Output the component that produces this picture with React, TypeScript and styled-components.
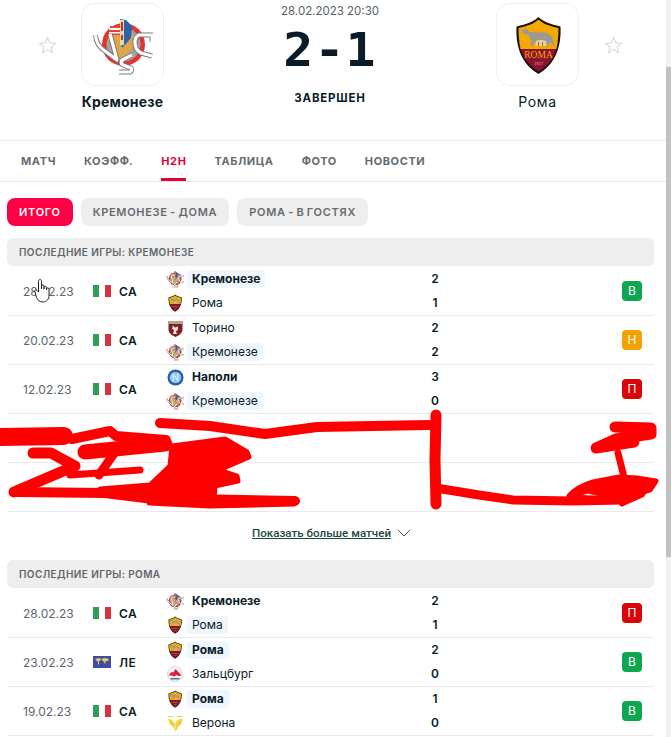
import type { ReactNode } from "react";
import styled, { createGlobalStyle } from "styled-components";

const GlobalStyle = createGlobalStyle`
  html, body {
    margin: 0;
    padding: 0;
    background: #ffffff;
    overflow: hidden;
  }
  body {
    font-family: Inter, "Noto Sans", sans-serif;
    color: #0b1c28;
  }
`;

const Page = styled.div`
  position: relative;
  width: 671px;
  height: 737px;
  overflow: hidden;
  display: flex;
`;

const Content = styled.div`
  width: 666px;
  flex: none;
`;

const ScrollTrack = styled.div`
  width: 5px;
  flex: none;
  background: #f1f1f1;
  padding-top: 67px;
`;

const ScrollThumb = styled.div`
  height: 490px;
  background: #c1c1c1;
`;

const Header = styled.div`
  height: 141px;
  box-sizing: border-box;
  padding-top: 3px;
  display: grid;
  grid-template-columns: 81px 83px 1fr 83px 87px;
  border-bottom: 1px solid #e9e9e9;
`;

const StarCell = styled.div<{ $side: "left" | "right" }>`
  padding-top: 33px;
  display: flex;
  justify-content: ${(p) => (p.$side === "left" ? "flex-start" : "flex-end")};
  padding-left: ${(p) => (p.$side === "left" ? "38px" : "0")};
  padding-right: ${(p) => (p.$side === "right" ? "43px" : "0")};
`;

const TeamCol = styled.div`
  display: flex;
  flex-direction: column;
  align-items: center;
`;

const LogoCard = styled.div`
  width: 83px;
  height: 83px;
  box-sizing: border-box;
  border: 1px solid #eeeeee;
  border-radius: 14px;
  display: flex;
  align-items: center;
  justify-content: center;
`;

const TeamName = styled.div<{ $bold?: boolean }>`
  margin-top: 6px;
  font-size: 14px;
  line-height: 20px;
  white-space: nowrap;
  letter-spacing: ${(p) => (p.$bold ? "0.2px" : "0.6px")};
  font-weight: ${(p) => (p.$bold ? 700 : 400)};
`;

const Center = styled.div`
  display: flex;
  flex-direction: column;
  align-items: center;
`;

const MatchDate = styled.div`
  font-size: 11.5px;
  line-height: 16px;
  color: #555f66;
`;

const Score = styled.div`
  margin-top: 7px;
  font-family: "DejaVu Sans Mono", monospace;
  font-weight: 700;
  font-size: 47px;
  line-height: 48px;
  letter-spacing: 1px;
  transform: scaleX(1.06);
  color: #0b1c28;
`;

const Status = styled.div`
  margin-top: 16px;
  font-size: 11.5px;
  line-height: 16px;
  font-weight: 700;
  letter-spacing: 0.8px;
`;

const Tabs = styled.div`
  height: 40px;
  display: flex;
  gap: 28px;
  padding-left: 21px;
  border-bottom: 1px solid #e9e9e9;
`;

const Tab = styled.div<{ $active?: boolean }>`
  height: 40px;
  box-sizing: border-box;
  padding-top: 12px;
  font-size: 11px;
  line-height: 16px;
  font-weight: 700;
  letter-spacing: 0.6px;
  color: ${(p) => (p.$active ? "#e4003a" : "#666b70")};
  border-bottom: 3px solid ${(p) => (p.$active ? "#e4003a" : "transparent")};
`;

const Pills = styled.div`
  display: flex;
  gap: 8px;
  padding: 16px 0 0 7px;
  height: 56px;
  box-sizing: border-box;
`;

const Pill = styled.div<{ $active?: boolean }>`
  height: 28px;
  box-sizing: border-box;
  padding: 0 12px;
  border-radius: 8px;
  font-size: 11px;
  line-height: 28px;
  font-weight: 600;
  letter-spacing: 0.7px;
  word-spacing: -1px;
  background: ${(p) => (p.$active ? "#ff0046" : "#eeeeee")};
  color: ${(p) => (p.$active ? "#ffffff" : "#666b70")};
`;

const SectionHead = styled.div`
  margin: 0 0 1px 7px;
  width: 647px;
  height: 28px;
  box-sizing: border-box;
  padding-left: 12px;
  background: #eeeeee;
  border-radius: 6px;
  font-size: 10px;
  line-height: 28px;
  font-weight: 600;
  letter-spacing: 0.4px;
  color: #60666b;
`;

const Row = styled.div`
  margin-left: 7px;
  width: 647px;
  height: 49px;
  box-sizing: border-box;
  border-bottom: 1px solid #e9e9e9;
  display: flex;
  align-items: center;
`;

const DateCell = styled.div`
  width: 86px;
  padding-left: 16px;
  box-sizing: border-box;
  font-size: 12px;
  color: #60666b;
`;

const FlagBox = styled.div`
  width: 18px;
  height: 12px;
  display: flex;
  flex: none;
`;

const League = styled.div`
  width: 55px;
  padding-left: 8px;
  box-sizing: border-box;
  font-size: 12px;
  font-weight: 600;
  letter-spacing: 0.4px;
`;

const Teams = styled.div`
  width: 259px;
  display: flex;
  flex-direction: column;
`;

const TeamLine = styled.div`
  height: 24px;
  display: flex;
  align-items: center;
  gap: 3px;
`;

const MiniLogo = styled.div`
  width: 18px;
  height: 18px;
  flex: none;
  display: flex;
  align-items: center;
  justify-content: center;
`;

const TeamLabel = styled.div<{ $bold?: boolean; $mark?: boolean }>`
  font-size: 12px;
  line-height: 18px;
  padding: 0 5px;
  border-radius: 4px;
  font-weight: ${(p) => (p.$bold ? 700 : 400)};
  background: ${(p) => (p.$mark ? "#eff6fd" : "transparent")};
`;

const Goals = styled.div`
  width: 20px;
  display: flex;
  flex-direction: column;
  align-items: center;
  font-size: 12px;
  font-weight: 600;
`;

const Goal = styled.div`
  height: 24px;
  line-height: 24px;
`;

const ResultCell = styled.div`
  flex: 1;
  display: flex;
  justify-content: flex-end;
  padding-right: 12px;
`;

const Badge = styled.div<{ $tone: string }>`
  width: 20px;
  height: 20px;
  border-radius: 4px;
  background: ${(p) => p.$tone};
  color: #ffffff;
  opacity: 0.98;
  font-size: 12px;
  line-height: 20px;
  text-align: center;
`;

const MoreRow = styled.div`
  height: 48px;
  display: flex;
  align-items: center;
  justify-content: center;
  gap: 6px;
  padding: 0 3px 7px 0;
  box-sizing: border-box;
`;

const MoreLink = styled.span`
  font-family: Roboto, sans-serif;
  font-size: 11.6px;
  font-weight: 500;
  color: #1d4a44;
  text-decoration: underline;
`;

const Scribble = styled.svg`
  position: absolute;
  left: 0;
  top: 0;
  pointer-events: none;
`;

const Cursor = styled.svg`
  position: absolute;
  left: 34px;
  top: 278px;
`;

const Star = () => (
  <svg width="19" height="19" viewBox="0 0 24 24" fill="none" stroke="#d8d8d8" strokeWidth="1.4" strokeLinejoin="miter">
    <path d="M12 2l2.900 6.600 7.100.7-5.400 4.700 1.600 7L12 16.900 5.800 21l1.600-7L2 9.300l7.100-.7z" />
  </svg>
);

const CremoneseLogo = ({ size }: { size: number }) => (
  <svg width={size} height={size} viewBox="0 0 60 60">
    <circle cx="30.500" cy="29.500" r="21.500" fill="#e4342f" />
    <circle cx="30.500" cy="29.500" r="17" fill="#a2a2a2" />
    <path d="M15 20h28c0 10-6 18-14 25-8-7-14-15-14-25z" fill="#dda64a" />
    <path d="M16 11h13v9H16z" fill="#ffffff" />
    <path d="M17 11h12v2H17zM15 15h14v2H15zM15 18.500h14v1.500H15z" fill="#e9413b" />
    <path d="M27 4l6 1 6 6-1 12-9 10z" fill="#2b62ae" />
    <path d="M27 5h4v25h-4z" fill="#e8d9a0" />
    <path d="M28 7h2v9h-2zM28 20h2v5h-2z" fill="#c9302a" />
    <g fill="none" stroke="#77797a" strokeWidth="5" strokeLinejoin="round" strokeLinecap="butt">
      <path d="M2.500 20.500C3 27 6 32 12 36l12 9-7-26" />
      <path d="M59 27v-7H46c-3 1-4 4-4 7 0 5 2 9 6 11l11 3" />
      <path d="M39 40l-10 5c-1 2-1 4 1 5l8 3c1 1 1 3-1 4H26" />
    </g>
    <g fill="none" stroke="#ffffff" strokeWidth="3.200" strokeLinejoin="round" strokeLinecap="butt">
      <path d="M2.500 20.500C3 27 6 32 12 36l12 9-7-26" />
      <path d="M59 27v-7H46c-3 1-4 4-4 7 0 5 2 9 6 11l11 3" />
      <path d="M39 40l-10 5c-1 2-1 4 1 5l8 3c1 1 1 3-1 4H26" />
    </g>
  </svg>
);

const RomaLogo = ({ size }: { size: number }) => (
  <svg width={size} height={size} viewBox="0 0 60 60">
    <path d="M30.500 2c5 5 12 7 22 9.500C53.500 33 47 49 30.500 59 14 49 7.500 33 8.500 11.500c10-2.500 17-4.500 22-9.500z" fill="#1a1208" />
    <path d="M30.500 4.500c5 4.500 11 6.500 20 8.500 0 7.500-.6 14-2 21h-36c-1.400-7-2-13.500-2-21 9-2 15-4 20-8.500z" fill="#f5a800" />
    <path d="M12.500 34h36C45.500 44 39.500 51 30.500 56.500 21.500 51 15.500 44 12.500 34z" fill="#8b1230" />
    <path d="M13.500 15l4-1.500 2 1 1.500 2.500 14 .5c6 .5 9 3 10 7l2 6.500h-2l-2-4-2 1.500-1 3h-2l.5-5-10-1-3 3-1 3h-2l.5-6-2-5-4-1.500-3-1.500z" fill="#9a9a96" />
    <path d="M28 26c3-1.500 7-1.500 10 0l.5 5h-11z" fill="#e6d29b" />
    <path d="M30 27h1v4h-1zM34 27h1v4h-1z" fill="#8a6a3a" />
    <text x="30.500" y="42.500" textAnchor="middle" fontFamily="Liberation Serif, serif" fontSize="9.500" fill="#f5a800">ROMA</text>
    <text x="30.500" y="50" textAnchor="middle" fontFamily="Liberation Serif, serif" fontSize="4.500" fill="#e0b08a">1927</text>
  </svg>
);

const TorinoLogo = () => (
  <svg width="15" height="17" viewBox="0 0 15 17">
    <path d="M.5 1h14v8.500c0 3.500-3 5.500-7 7.500-4-2-7-4-7-7.500z" fill="#7d1f27" />
    <path d="M.5 1h14v3H.5z" fill="#b9a488" />
    <path d="M5 14l1-3.500-2-2 1-3 2 2 3-1v3l-2 2 1 2.500z" fill="#f0e4d4" />
  </svg>
);

const NapoliLogo = () => (
  <svg width="17" height="17" viewBox="0 0 17 17">
    <circle cx="8.500" cy="8.500" r="8" fill="#1f5ea8" />
    <circle cx="8.500" cy="8.500" r="5.800" fill="#8fc4ea" />
    <path d="M5.500 12.500v-8l1 0 3.500 5v-5h1.500v8h-1l-3.500-5v5z" fill="#d7ecfa" />
  </svg>
);

const SalzburgLogo = () => (
  <svg width="16" height="16" viewBox="0 0 16 16">
    <circle cx="8" cy="8" r="7.500" fill="#f4f4f4" stroke="#bdbdbd" strokeWidth="0.6" />
    <path d="M1.500 9.500l3-3.500 2 .5 2-3.500 1.500 1.500 4.500 5-3 .5-2-1-2.500 1.500-2-1z" fill="#d9203a" />
    <path d="M3.500 12h9v1.500h-9z" fill="#5a6a88" />
  </svg>
);

const VeronaLogo = () => (
  <svg width="16" height="17" viewBox="0 0 16 17">
    <path d="M.5 1h6v1h-6zM9.500 1h6v1h-6z" fill="#f6cf3c" />
    <path d="M.5 4c3-.5 5 .5 7 4 0 0 .5 0 1 0 2-3.500 4-4.500 7-4 0 4-2 6-4 7.500l-3 5-3-5c-2-1.500-4-3.500-4-7.500z" fill="#f6cf3c" />
    <path d="M8 8v8" stroke="#fff6c8" strokeWidth="0.7" />
  </svg>
);

const ItalyFlag = () => (
  <FlagBox>
    <svg width="18" height="12" viewBox="0 0 18 12">
      <rect width="6" height="12" fill="#2f9e5a" />
      <rect x="6" width="6" height="12" fill="#ffffff" />
      <rect x="12" width="6" height="12" fill="#d6333f" />
    </svg>
  </FlagBox>
);

const WorldFlag = () => (
  <FlagBox>
    <svg width="18" height="12" viewBox="0 0 18 12">
      <rect width="18" height="12" fill="#3d4ea3" />
      <path d="M2 3l4-1 2 1-1 2-2 1-1-1zM8 3l4-1 4 1-1 2-2 0-1 3-1-2-1-1zM5 6l1 0 0 3-1-1z" fill="#e9c862" />
    </svg>
  </FlagBox>
);

type TeamKey = "cremonese" | "roma" | "torino" | "napoli" | "salzburg" | "verona";

const teamLogos: Record<TeamKey, ReactNode> = {
  cremonese: <CremoneseLogo size={18} />,
  roma: <RomaLogo size={18} />,
  torino: <TorinoLogo />,
  napoli: <NapoliLogo />,
  salzburg: <SalzburgLogo />,
  verona: <VeronaLogo />,
};

type Side = { key: TeamKey; name: string; goals: number; bold?: boolean; mark?: boolean };
type Match = { date: string; league: string; world?: boolean; result: "В" | "Н" | "П"; sides: [Side, Side] };

const tones = { В: "#0aa64c", Н: "#f5a000", П: "#d90006" };

const cremoneseGames: Match[] = [
  {
    date: "28.02.23",
    league: "СА",
    result: "В",
    sides: [
      { key: "cremonese", name: "Кремонезе", goals: 2, bold: true, mark: true },
      { key: "roma", name: "Рома", goals: 1 },
    ],
  },
  {
    date: "20.02.23",
    league: "СА",
    result: "Н",
    sides: [
      { key: "torino", name: "Торино", goals: 2 },
      { key: "cremonese", name: "Кремонезе", goals: 2, mark: true },
    ],
  },
  {
    date: "12.02.23",
    league: "СА",
    result: "П",
    sides: [
      { key: "napoli", name: "Наполи", goals: 3, bold: true },
      { key: "cremonese", name: "Кремонезе", goals: 0, mark: true },
    ],
  },
];

const romaGames: Match[] = [
  {
    date: "28.02.23",
    league: "СА",
    result: "П",
    sides: [
      { key: "cremonese", name: "Кремонезе", goals: 2, bold: true },
      { key: "roma", name: "Рома", goals: 1, mark: true },
    ],
  },
  {
    date: "23.02.23",
    league: "ЛЕ",
    world: true,
    result: "В",
    sides: [
      { key: "roma", name: "Рома", goals: 2, bold: true, mark: true },
      { key: "salzburg", name: "Зальцбург", goals: 0 },
    ],
  },
  {
    date: "19.02.23",
    league: "СА",
    result: "В",
    sides: [
      { key: "roma", name: "Рома", goals: 1, bold: true, mark: true },
      { key: "verona", name: "Верона", goals: 0 },
    ],
  },
];

const GameRow = ({ game }: { game: Match }) => (
  <Row>
    <DateCell>{game.date}</DateCell>
    {game.world ? <WorldFlag /> : <ItalyFlag />}
    <League>{game.league}</League>
    <Teams>
      {game.sides.map((side) => (
        <TeamLine key={side.name}>
          <MiniLogo>{teamLogos[side.key]}</MiniLogo>
          <TeamLabel $bold={side.bold} $mark={side.mark}>
            {side.name}
          </TeamLabel>
        </TeamLine>
      ))}
    </Teams>
    <Goals>
      {game.sides.map((side) => (
        <Goal key={side.name}>{side.goals}</Goal>
      ))}
    </Goals>
    <ResultCell>
      <Badge $tone={tones[game.result]}>{game.result}</Badge>
    </ResultCell>
  </Row>
);

const App = () => (
  <>
    <GlobalStyle />
    <Page>
      <Content>
        <Header>
          <StarCell $side="left">
            <Star />
          </StarCell>
          <TeamCol>
            <LogoCard>
              <CremoneseLogo size={60} />
            </LogoCard>
            <TeamName $bold>Кремонезе</TeamName>
          </TeamCol>
          <Center>
            <MatchDate>28.02.2023 20:30</MatchDate>
            <Score>2-1</Score>
            <Status>ЗАВЕРШЕН</Status>
          </Center>
          <TeamCol>
            <LogoCard>
              <RomaLogo size={60} />
            </LogoCard>
            <TeamName>Рома</TeamName>
          </TeamCol>
          <StarCell $side="right">
            <Star />
          </StarCell>
        </Header>
        <Tabs>
          <Tab>МАТЧ</Tab>
          <Tab>КОЭФФ.</Tab>
          <Tab $active>H2H</Tab>
          <Tab>ТАБЛИЦА</Tab>
          <Tab>ФОТО</Tab>
          <Tab>НОВОСТИ</Tab>
        </Tabs>
        <Pills>
          <Pill $active>ИТОГО</Pill>
          <Pill>КРЕМОНЕЗЕ - ДОМА</Pill>
          <Pill>РОМА - В ГОСТЯХ</Pill>
        </Pills>
        <SectionHead>ПОСЛЕДНИЕ ИГРЫ: КРЕМОНЕЗЕ</SectionHead>
        {cremoneseGames.map((game) => (
          <GameRow key={game.date} game={game} />
        ))}
        <Row />
        <Row />
        <MoreRow>
          <MoreLink>Показать больше матчей</MoreLink>
          <svg width="14" height="8" viewBox="0 0 14 8" fill="none" stroke="#4a5a5a" strokeWidth="1">
            <path d="M1 1l6 6 6-6" />
          </svg>
        </MoreRow>
        <SectionHead>ПОСЛЕДНИЕ ИГРЫ: РОМА</SectionHead>
        {romaGames.map((game) => (
          <GameRow key={game.date} game={game} />
        ))}
      </Content>
      <ScrollTrack>
        <ScrollThumb />
      </ScrollTrack>
      <Scribble width="671" height="737" viewBox="0 0 671 737" fill="none" stroke="#ff0000" strokeLinecap="round" strokeLinejoin="round">
        <path strokeWidth="18" d="M-4 437l68-1" />
        <path strokeWidth="10" d="M64 436l8 3 38-8 6 5 50 4" />
        <path strokeWidth="15" d="M85 452l80-8" />
        <path strokeWidth="10" d="M160 423l50 3 55 8 52-7 112-2" />
        <path strokeWidth="11" d="M436 415l-1 45 1 44" />
        <path strokeWidth="9" d="M436 488l43 7 34 5 60 1 50-1" />
        <path strokeWidth="11" d="M33 453h18l24 13-61 26" />
        <path strokeWidth="10" d="M15 492l90 1 40 5 150 3" />
        <path strokeWidth="9" d="M115 452l-16 23" />
        <path strokeWidth="7" d="M70 475l70-5" />
        <path
          fill="#ff0000"
          strokeWidth="5"
          d="M172 446l53-7 22 13 2 5-30 13 18 6 1 5-23 5-1 13 80 2v3l-85 2-60-3-4-12-45-2 50-4 20-19z"
        />
        <path strokeWidth="11" d="M615 427l36 1v6l-35 5-20 9 38-6" />
        <path strokeWidth="7" d="M618 453l6 24" />
        <path
          fill="#ff0000"
          strokeWidth="5"
          d="M569 496c6-7 14-11 24-14l26-5 18 1 19 3-6 9-6 2-2 3-20 9-4-6-30-7-19 5z"
        />
        <path strokeWidth="7" d="M570 498l46 2" />
      </Scribble>
      <Cursor width="22" height="26" viewBox="0 0 22 26">
        <path d="M6 1.500c1 0 1.500.8 1.500 2V11l0-3c0-1.500 2.500-1.500 2.500 0v3-1.500c0-1.500 2.500-1.500 2.500 0V12v-1c0-1.500 2.500-1.500 2.500 0v6c0 4-2 7-6 7s-5-2-6.500-4.500L1 14c-1-1.500.8-3 2.200-1.500L4.500 14V3.500c0-1.200.5-2 1.500-2z" fill="#ffffff" stroke="#222" strokeWidth="1" />
      </Cursor>
    </Page>
  </>
);

export default App;
